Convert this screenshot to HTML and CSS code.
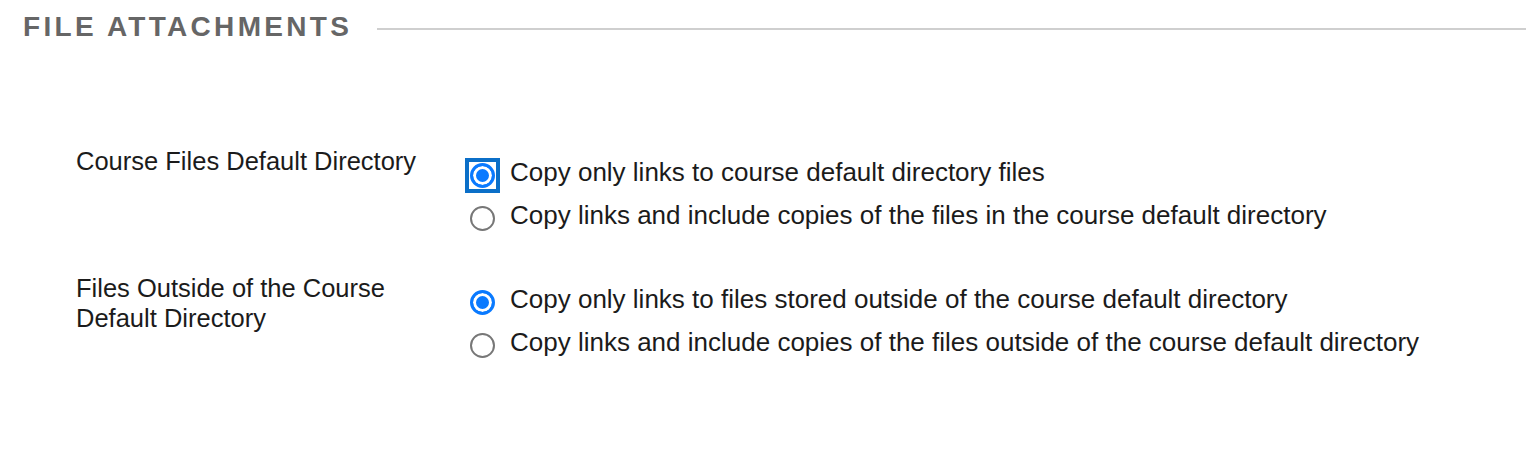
FILE: index.html
```html
<!DOCTYPE html>
<html lang="en">
  <head>
    <meta charset="UTF-8" />
    <meta name="viewport" content="width=device-width, initial-scale=1.0" />
    <title>File Attachments</title>
    <link rel="stylesheet" href="styles.css">
  </head>

  <body>
    <section class="panel">
      <h2 class="panel-title"><span>File Attachments</span></h2>

      <div class="field-row">
        <div class="field-label">Course Files Default Directory</div>
        <div class="field-options">
          <label class="option">
            <span class="focus-ring">
              <input type="radio" name="course-files" checked />
            </span>
            <span>Copy only links to course default directory files</span>
          </label>
          <label class="option">
            <input type="radio" name="course-files" />
            <span>Copy links and include copies of the files in the course default directory</span>
          </label>
        </div>
      </div>

      <div class="field-row">
        <div class="field-label">Files Outside of the Course Default Directory</div>
        <div class="field-options">
          <label class="option">
            <input type="radio" name="outside-files" checked />
            <span>Copy only links to files stored outside of the course default directory</span>
          </label>
          <label class="option">
            <input type="radio" name="outside-files" />
            <span>Copy links and include copies of the files outside of the course default directory</span>
          </label>
        </div>
      </div>
    </section>
  </body>
</html>
```

FILE: styles.css
```css
body,
html {
  margin: 0;
  padding: 0;
  background-color: white;
  font-family: "Liberation Sans", Arial, sans-serif;
  color: #1b1b1b;
}

.panel {
  padding-top: 11px;
  padding-bottom: 40px;
}

.panel-title {
  display: flex;
  align-items: center;
  margin: 0 0 103px 0;
  padding-left: 23px;
  font-size: 28px;
  line-height: 32px;
  font-weight: bold;
  letter-spacing: 3.3px;
  text-transform: uppercase;
  color: #666;
}

.panel-title::after {
  content: "";
  flex: 1;
  height: 2px;
  margin-left: 25px;
  margin-top: 3px;
  background: #cfcfcf;
}

.field-row {
  display: flex;
  margin-bottom: 42px;
}

.field-label {
  width: 350px;
  padding-left: 76px;
  padding-right: 44px;
  font-size: 25.5px;
  line-height: 30px;
}

.field-options {
  display: flex;
  flex-direction: column;
  gap: 10px;
  padding-top: 9px;
}

.option {
  display: flex;
  align-items: center;
  gap: 15px;
  font-size: 26px;
  line-height: 30px;
}

.option input {
  appearance: none;
  -webkit-appearance: none;
  width: 25px;
  height: 25px;
  margin: 8px 0 0 0;
  border: 2px solid #777;
  border-radius: 50%;
  background: white;
  flex-shrink: 0;
}

.option input:checked {
  border: 3px solid #0a7aff;
  background: #0a7aff;
  box-shadow: inset 0 0 0 3px white;
}

.focus-ring {
  display: flex;
  margin: 3px -5px -5px -5px;
  padding: 1px;
  border: 4px solid #0b6fc8;
  background: white;
}

.focus-ring input {
  margin: 0;
}
```
